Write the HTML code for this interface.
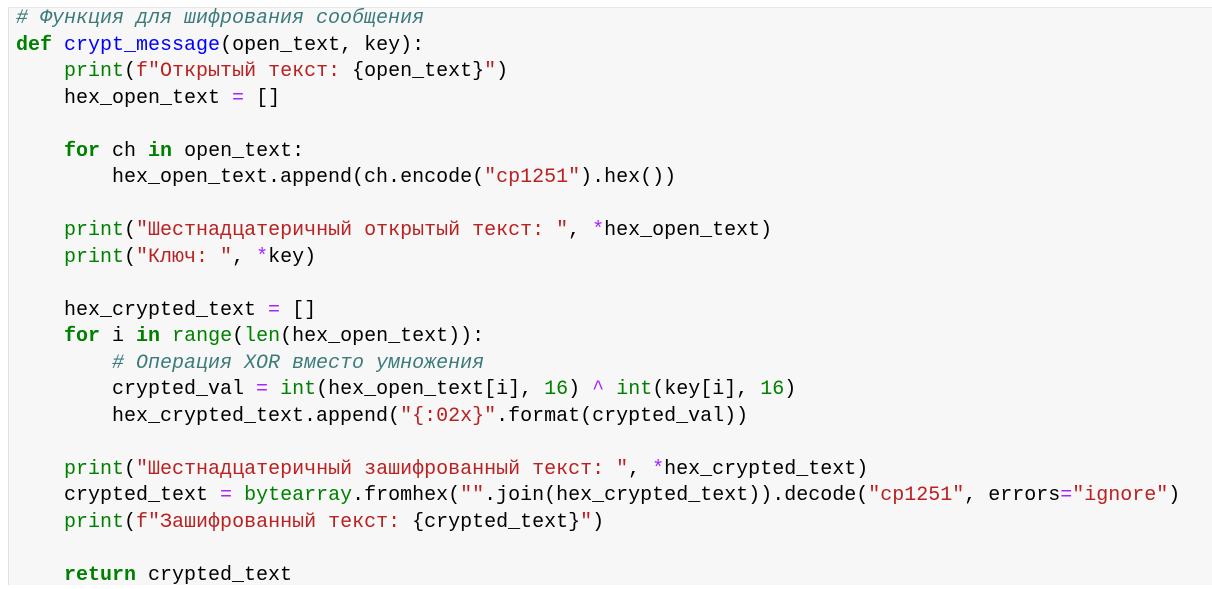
<!DOCTYPE html>
<html><head><meta charset="utf-8"><style>
html,body{margin:0;padding:0;width:1212px;height:585px;overflow:hidden;background:#fff}
.area{position:absolute;left:8px;top:7px;right:0;bottom:0;background:#f7f7f7;border-left:1px solid #e0e0e0;border-top:1px solid #e8e8e8}
pre{position:absolute;left:16px;top:6px;margin:0;font-family:"Liberation Mono","DejaVu Sans Mono",monospace;font-size:20px;line-height:26.5px;color:#000}
.c{color:#3d7b7b;font-style:italic}
.k{color:#008000;font-weight:bold}
.b{color:#008000}
.f{color:#0000ff}
.s{color:#ba2121}
.o{color:#aa22ff}
.n{color:#008000}
</style></head><body>
<div class="area"></div>
<pre><span class="c"># Функция для шифрования сообщения</span>
<span class="k">def</span> <span class="f">crypt_message</span>(open_text, key):
    <span class="b">print</span>(<span class="s">f"Открытый текст: </span>{open_text}<span class="s">"</span>)
    hex_open_text <span class="o">=</span> []

    <span class="k">for</span> ch <span class="k">in</span> open_text:
        hex_open_text.append(ch.encode(<span class="s">"cp1251"</span>).hex())

    <span class="b">print</span>(<span class="s">"Шестнадцатеричный открытый текст: "</span>, <span class="o">*</span>hex_open_text)
    <span class="b">print</span>(<span class="s">"Ключ: "</span>, <span class="o">*</span>key)

    hex_crypted_text <span class="o">=</span> []
    <span class="k">for</span> i <span class="k">in</span> <span class="b">range</span>(<span class="b">len</span>(hex_open_text)):
        <span class="c"># Операция XOR вместо умножения</span>
        crypted_val <span class="o">=</span> <span class="b">int</span>(hex_open_text[i], <span class="n">16</span>) <span class="o">^</span> <span class="b">int</span>(key[i], <span class="n">16</span>)
        hex_crypted_text.append(<span class="s">"{:02x}"</span>.format(crypted_val))

    <span class="b">print</span>(<span class="s">"Шестнадцатеричный зашифрованный текст: "</span>, <span class="o">*</span>hex_crypted_text)
    crypted_text <span class="o">=</span> <span class="b">bytearray</span>.fromhex(<span class="s">""</span>.join(hex_crypted_text)).decode(<span class="s">"cp1251"</span>, errors<span class="o">=</span><span class="s">"ignore"</span>)
    <span class="b">print</span>(<span class="s">f"Зашифрованный текст: </span>{crypted_text}<span class="s">"</span>)

    <span class="k">return</span> crypted_text</pre>
</body></html>
